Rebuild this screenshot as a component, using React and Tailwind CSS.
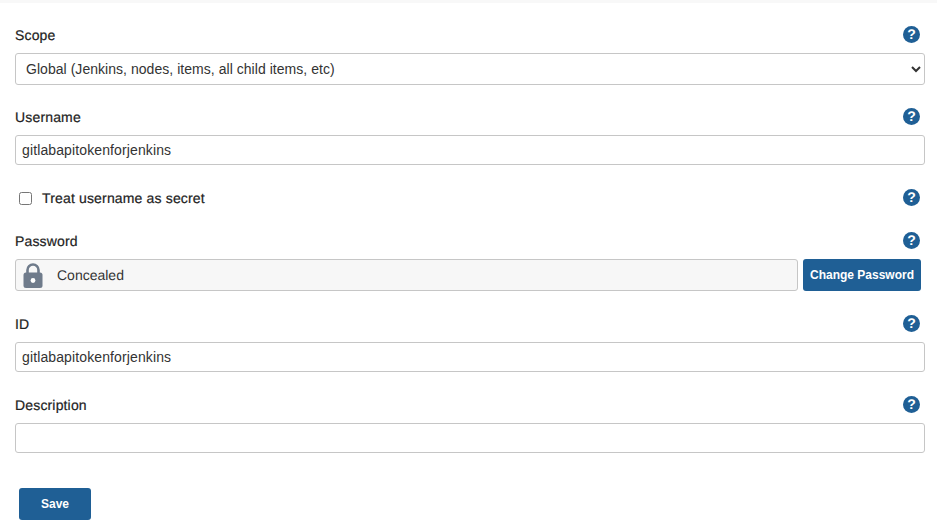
function HelpIcon() {
  return (
    <span className="flex h-[17px] w-[17px] items-center justify-center rounded-full bg-[#1f5f95] text-[14px] leading-none font-bold text-white mb-[2px]">
      ?
    </span>
  );
}

function LabelRow({ label }) {
  return (
    <div className="flex h-5 items-center justify-between pr-[5px] mb-2">
      <span className="text-[14px] tracking-[0.16px] text-[#222] [-webkit-text-stroke:0.2px_#222]">{label}</span>
      <HelpIcon />
    </div>
  );
}

function TextField({ value }) {
  return (
    <input
      readOnly
      value={value}
      className="block h-[30px] w-full rounded-[3px] border border-[#c6c6c6] bg-white px-[6px] text-[14px] tracking-[0.12px] text-[#333] outline-none"
    />
  );
}

function LockIcon() {
  return (
    <svg width="20" height="25" viewBox="0 0 20 25" className="block">
      <path d="M4.5 11V7a5.5 5.5 0 0 1 11 0v4" fill="none" stroke="#6f7b8b" strokeWidth="2.6" />
      <rect x="0.5" y="9.5" width="19" height="15.5" rx="2.5" fill="#6f7b8b" />
      <circle cx="10" cy="17.5" r="2.4" fill="#fff" />
    </svg>
  );
}

export default function App() {
  return (
    <div className="min-h-[527px] bg-white font-['Liberation_Sans',Arial,sans-serif] [text-rendering:geometricPrecision]">
      <div className="h-[3px] bg-[#f8f8f8]" />
      <form className="pl-[15px] pr-3 pt-[22px]">
        <LabelRow label="Scope" />
        <select className="block h-8 w-full rounded-[3px] border border-[#c6c6c6] bg-white pl-[6px] text-[14px] tracking-[0.04px] text-[#333] outline-none">
          <option>Global (Jenkins, nodes, items, all child items, etc)</option>
        </select>

        <div className="mt-[22px]">
          <LabelRow label="Username" />
          <TextField value="gitlabapitokenforjenkins" />
        </div>

        <div className="mt-[23px] flex h-5 items-center justify-between pr-[5px]">
          <label className="flex items-center pl-1 text-[14px] tracking-[0.16px] text-[#222] [-webkit-text-stroke:0.2px_#222]">
            <input type="checkbox" className="m-0 h-[13px] w-[13px]" />
            <span className="ml-[10px]">Treat username as secret</span>
          </label>
          <HelpIcon />
        </div>

        <div className="mt-[23px]">
          <LabelRow label="Password" />
          <div className="flex gap-[5px]">
            <div className="flex h-8 flex-1 items-center rounded-[3px] border border-[#c6c6c6] bg-[#f7f7f7] pl-[7px] text-[14px] text-[#333]">
              <LockIcon />
              <span className="ml-[14px]">Concealed</span>
            </div>
            <button
              type="button"
              className="mr-1 h-8 w-[118px] rounded-[3px] bg-[#1f5f95] text-[12px] font-bold text-white"
            >
              Change Password
            </button>
          </div>
        </div>

        <div className="mt-[23px]">
          <LabelRow label="ID" />
          <TextField value="gitlabapitokenforjenkins" />
        </div>

        <div className="mt-[23px]">
          <LabelRow label="Description" />
          <TextField value="" />
        </div>

        <button
          type="button"
          className="ml-1 mt-[35px] block h-8 w-[72px] rounded-[3px] bg-[#1f5f95] text-[12px] font-bold text-white"
        >
          Save
        </button>
      </form>
    </div>
  );
}
